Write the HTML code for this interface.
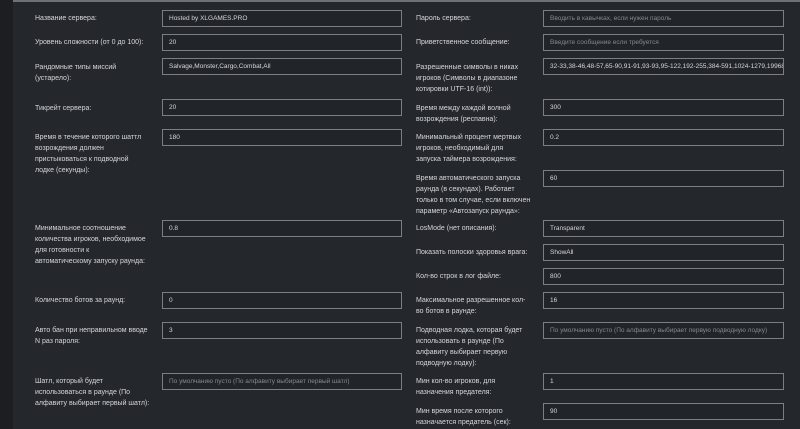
<!DOCTYPE html>
<html><head><meta charset="utf-8"><style>
body{margin:0;width:800px;height:429px;overflow:hidden;background:#24272c;font-family:"Liberation Sans",sans-serif;position:relative}
.strip{position:absolute;left:0;top:0;width:13px;height:429px;background:#1c1e22}
.top{position:absolute;left:13px;top:0;width:787px;height:2px;background:#6e7176}
.l{position:absolute;color:#d6d7d9;font-size:7px;line-height:11px;white-space:nowrap}
.i{position:absolute;height:15px;border:1px solid #7b7e83;background:#212429;color:#d6d7d9;font-size:6.5px;line-height:15px;padding-left:6px;box-sizing:content-box;white-space:nowrap;overflow:hidden}
.a{left:162px;width:232px}
.b{left:543px;width:233px}
.p{color:#85888d}
.la{left:35px}
.lb{left:416px}
</style></head><body>
<div class="strip"></div><div class="top"></div>

<div class="l la" style="top:13px">Название сервера:</div>
<div class="i a" style="top:10px">Hosted by XLGAMES.PRO</div>
<div class="l la" style="top:37px">Уровень сложности (от 0 до 100):</div>
<div class="i a" style="top:34px">20</div>
<div class="l la" style="top:62px">Рандомные типы миссий<br>(устарело):</div>
<div class="i a" style="top:58px">Salvage,Monster,Cargo,Combat,All</div>
<div class="l la" style="top:103px">Тикрейт сервера:</div>
<div class="i a" style="top:99px">20</div>
<div class="l la" style="top:132px">Время в течение которого шаттл<br>возрождения должен<br>пристыковаться к подводной<br>лодке (секунды):</div>
<div class="i a" style="top:129px">180</div>
<div class="l la" style="top:223px">Минимальное соотношение<br>количества игроков, необходимое<br>для готовности к<br>автоматическому запуску раунда:</div>
<div class="i a" style="top:220px">0.8</div>
<div class="l la" style="top:295px">Количество ботов за раунд:</div>
<div class="i a" style="top:292px">0</div>
<div class="l la" style="top:325px">Авто бан при неправильном вводе<br>N раз пароля:</div>
<div class="i a" style="top:322px">3</div>
<div class="l la" style="top:376px">Шатл, который будет<br>использоваться в раунде (По<br>алфавиту выбирает первый шатл):</div>
<div class="i a p" style="top:373px">По умолчанию пусто (По алфавиту выбирает первый шатл)</div>

<div class="l lb" style="top:13px">Пароль сервера:</div>
<div class="i b p" style="top:10px">Вводить в кавычках, если нужен пароль</div>
<div class="l lb" style="top:37px">Приветственное сообщение:</div>
<div class="i b p" style="top:34px">Введите сообщение если требуется</div>
<div class="l lb" style="top:62px">Разрешенные символы в никах<br>игроков (Символы в диапазоне<br>котировки UTF-16 (int)):</div>
<div class="i b" style="top:58px">32-33,38-46,48-57,65-90,91-91,93-93,95-122,192-255,384-591,1024-1279,19968-</div>
<div class="l lb" style="top:103px">Время между каждой волной<br>возрождения (респавна):</div>
<div class="i b" style="top:99px">300</div>
<div class="l lb" style="top:132px">Минимальный процент мертвых<br>игроков, необходимый для<br>запуска таймера возрождения:</div>
<div class="i b" style="top:129px">0.2</div>
<div class="l lb" style="top:173px">Время автоматического запуска<br>раунда (в секундах). Работает<br>только в том случае, если включен<br>параметр «Автозапуск раунда»:</div>
<div class="i b" style="top:170px">60</div>
<div class="l lb" style="top:223px">LosMode (нет описания):</div>
<div class="i b" style="top:220px">Transparent</div>
<div class="l lb" style="top:247px">Показать полоски здоровья врага:</div>
<div class="i b" style="top:244px">ShowAll</div>
<div class="l lb" style="top:271px">Кол-во строк в лог файле:</div>
<div class="i b" style="top:268px">800</div>
<div class="l lb" style="top:295px">Максимальное разрешенное кол-<br>во ботов в раунде:</div>
<div class="i b" style="top:292px">16</div>
<div class="l lb" style="top:325px">Подводная лодка, которая будет<br>использовать в раунде (По<br>алфавиту выбирает первую<br>подводную лодку):</div>
<div class="i b p" style="top:322px">По умолчанию пусто (По алфавиту выбирает первую подводную лодку)</div>
<div class="l lb" style="top:376px">Мин кол-во игроков, для<br>назначения предателя:</div>
<div class="i b" style="top:373px">1</div>
<div class="l lb" style="top:406px">Мин время после которого<br>назначается предатель (сек):</div>
<div class="i b" style="top:403px">90</div>
</body></html>
